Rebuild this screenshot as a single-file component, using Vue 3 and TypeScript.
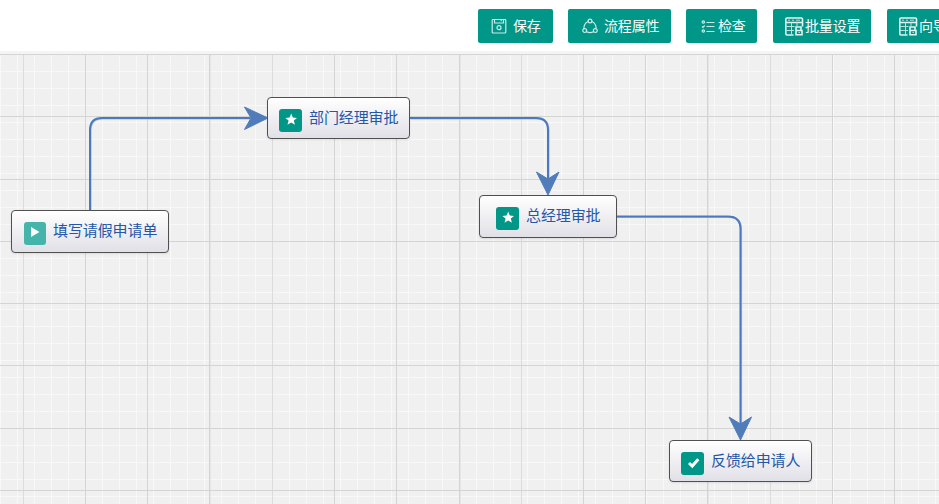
<script setup lang="ts">
interface FlowNode { id: string; label: string; kind: 'play' | 'star' | 'check'; x: number; y: number; w: number; h: number; pad: number }
interface ToolButton { id: string; label: string; icon: 'save' | 'ring' | 'list' | 'table' }

const buttons: ToolButton[] = [
  { id: 'save', label: '保存', icon: 'save' },
  { id: 'props', label: '流程属性', icon: 'ring' },
  { id: 'verify', label: '检查', icon: 'list' },
  { id: 'batch', label: '批量设置', icon: 'table' },
  { id: 'wizard', label: '向导', icon: 'table' },
]

const nodes: FlowNode[] = [
  { id: 'apply', label: '填写请假申请单', kind: 'play', x: 11, y: 210, w: 158, h: 43, pad: 12 },
  { id: 'dept', label: '部门经理审批', kind: 'star', x: 267, y: 97, w: 143, h: 42, pad: 11 },
  { id: 'general', label: '总经理审批', kind: 'star', x: 479, y: 195, w: 138, h: 43, pad: 16 },
  { id: 'feedback', label: '反馈给申请人', kind: 'check', x: 669, y: 440, w: 143, h: 42, pad: 11 },
]

const columns = [23, 85, 147, 209, 272, 334, 396, 459, 521, 583, 645, 707, 770, 832, 894]
const faintColumns = [23, 272, 521, 770]
const wideColumns = [209, 459, 707]
const rows = Array.from({ length: 8 }, (_, i) => Math.round(i * 62.25) + 0.5)
const wire = 'M90 156V76Q90 64 102 64H250M410 64H536Q548 64 548 76V125M617 162.5H728Q740.5 162.5 740.5 175V370'

function nodeStyle(n: FlowNode) {
  return { left: `${n.x}px`, top: `${n.y - 54}px`, width: `${n.w}px`, height: `${n.h}px`, paddingLeft: `${n.pad}px` }
}
</script>

<template>
  <div class="designer">
    <header class="toolbar">
      <button v-for="b in buttons" :key="b.id" class="tool" :class="b.id" type="button">
        <svg v-if="b.icon === 'save'" class="icon" width="16" height="16" viewBox="0 0 16 16">
          <path d="M2 1.500H14q.8 0 .8.8V14q0 1-1 1H2.200q-1 0-1-1V2.300q0-.8.8-.8M3.500 1.500V5h9V1.500M10.200 1.800V3.300" />
          <circle cx="8" cy="9.700" r="2" />
        </svg>
        <svg v-else-if="b.icon === 'ring'" class="icon" width="16" height="16" viewBox="0 0 16 16">
          <circle cx="8" cy="3" r="1.9" /><circle cx="2.700" cy="12.600" r="1.9" /><circle cx="13.300" cy="12.600" r="1.9" />
          <path d="M6.100 3.500Q1.700 5.700 1.900 10.700M9.900 3.500Q14.300 5.700 14.100 10.700M4.500 13.700Q8 15.500 11.500 13.700" />
        </svg>
        <svg v-else-if="b.icon === 'list'" class="icon" width="14" height="14" viewBox="0 0 14 14">
          <circle cx="2.300" cy="3" r="1.200" /><path d="M1 7.500l1 .9 1.700-1.900M5.500 3.500h8M5.500 7.500h8M5.500 12.500h8" /><circle cx="2.300" cy="12" r="1.200" />
        </svg>
        <svg v-else class="icon table" width="20" height="20" viewBox="0 0 20 20">
          <path d="M9.500 19H3q-1.200 0-1.200-1.200V3.200Q1.800 2 3 2H17.300q1.200 0 1.200 1.200V10.500M1.800 6.500H18.500M12 14V11h5v3M12 14.500v4.200h6v-4.200z" />
          <path class="thin" d="M2 10.500h8.500M2 14.500h8M7.500 6.500v12M13 6.500v4M4 4.200h2M8 4.200h2M12 4.200h4M14.500 16.500h1.500" />
        </svg>
        <span>{{ b.label }}</span>
      </button>
    </header>

    <main class="canvas">
      <svg class="wires" width="939" height="450" viewBox="0 0 939 450">
        <g class="grid">
          <line v-for="x in wideColumns" :key="'w' + x" class="soft" :x1="x + 1.5" y1="0" :x2="x + 1.5" y2="450" />
          <line v-for="x in columns" :key="'c' + x" :class="{ faint: faintColumns.includes(x) }" :x1="x + 0.5" y1="0" :x2="x + 0.5" y2="450" />
          <line v-for="y in rows" :key="'r' + y" x1="0" :y1="y" x2="939" :y2="y" />
        </g>
        <path class="halo" transform="translate(.5 .5)" :d="wire" />
        <path class="link" :d="wire" />
        <g class="arrows">
          <path d="M268 64L244.500 53L251 64L244.500 75.500Z" />
          <path d="M548 141L536.500 118L548 125L559 118Z" />
          <path d="M740.500 386L729 363L740.500 370L751.500 363Z" />
        </g>
      </svg>
      <div v-for="n in nodes" :key="n.id" class="node" :class="n.id" :style="nodeStyle(n)">
        <span class="badge" :class="n.kind">
          <svg width="23" height="23" viewBox="0 0 23 23">
            <path v-if="n.kind === 'play'" d="M7 5L15.500 10L7 15Z" />
            <path v-else-if="n.kind === 'star'" d="M12.200 4.500L13.800 8.600L18 8.900L14.800 11.600L15.900 15.700L12.200 13.400L8.500 15.700L9.600 11.600L6.400 8.900L10.600 8.600Z" />
            <path v-else class="tick" d="M8 11L11.200 14L17.300 7.200" />
          </svg>
        </span>
        <span class="label">{{ n.label }}</span>
      </div>
    </main>
  </div>
</template>

<style>
body { margin: 0; overflow: hidden; background: #fff; }
</style>

<style scoped>
.designer { width: 100%; height: 504px; overflow: hidden; font-family: "Noto Sans CJK SC", sans-serif; }
.toolbar { box-sizing: border-box; display: flex; gap: 15px; height: 54px; padding: 9px 0 0 478px; border-bottom: 3px solid #f4f4f4; overflow: hidden; }
.tool { box-sizing: border-box; flex: none; display: flex; align-items: center; height: 34px; padding: 0; border: 0; border-radius: 2px; background: #009688; color: #fff; font: 14px/34px "Noto Sans CJK SC", sans-serif; letter-spacing: -0.15px; white-space: nowrap; }
.tool span { position: relative; top: -1px; }
.icon { flex: none; fill: none; stroke: #c9ebe6; stroke-width: 1.2; }
.icon.table { stroke: #e2f4f1; stroke-width: 1.6; }
.icon.table .thin { stroke: #b8e1dc; stroke-width: 1; }
.save { width: 75px; padding-left: 13px; gap: 6px; }
.props { width: 103px; padding-left: 14px; gap: 6px; }
.verify { width: 71px; padding-left: 15px; gap: 3px; }
.batch { width: 98px; padding-left: 11px; margin-left: 1px; }
.wizard { width: 71px; padding-left: 11px; margin-left: 1px; }
.table + span { margin-left: 1px; }
.canvas {
  position: relative; height: 450px; overflow: hidden; background-color: #f0f0f0;
  background-image: linear-gradient(to right, #f8f8f8 1px, transparent 1px), linear-gradient(to bottom, #f8f8f8 1px, transparent 1px);
  background-size: 17px 17px;
}
.wires { position: absolute; left: 0; top: 0; }
.grid { stroke: #d4d4d4; stroke-width: 1; }
.grid .faint { stroke: #dcdcdc; }
.grid .soft { stroke: #e6e6e6; }
.link { fill: none; stroke: #4a7abd; stroke-width: 2; }
.halo { fill: none; stroke: #a9c0df; stroke-width: 2.2; }
.arrows { fill: #507cba; stroke: #507cba; stroke-width: 1; stroke-linejoin: round; }
.node { position: absolute; box-sizing: border-box; display: flex; align-items: center; border: 1px solid #505050; border-radius: 4px; background: linear-gradient(#fff, #e0e0e7); box-shadow: 0 1px 2px #00000018; }
.badge { flex: none; width: 23px; height: 23px; margin-top: 4px; border-radius: 3px; background: #009688; }
.badge svg { display: block; fill: #fff; }
.badge.play { width: 22px; background: #45b5ab; }
.badge .tick { fill: none; stroke: #fff; stroke-width: 3; }
.label { margin-left: 7px; margin-top: -2px; color: #2457a7; font-size: 15px; line-height: 20px; letter-spacing: -0.1px; white-space: nowrap; }
.apply .label, .general .label { margin-top: -4px; }
</style>
